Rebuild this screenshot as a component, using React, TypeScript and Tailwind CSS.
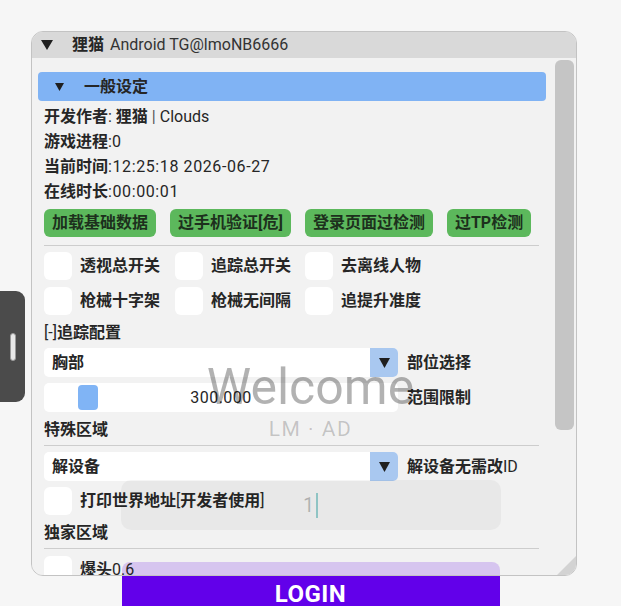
import React from "react";

// filled down-pointing triangle used for tree nodes and combo arrows
function Tri({ w, h, color = "#1f1f1f" }: { w: number; h: number; color?: string }) {
    return (
        <svg width={w} height={h} viewBox={`0 0 ${w} ${h}`} className="shrink-0">
            <path d={`M0 0H${w}L${w / 2} ${h}Z`} fill={color}/>
        </svg>
    );
}

function Check({ label }: { label: React.ReactNode }) {
    return (
        <div className="flex items-center gap-[8px]">
            <div className="w-[28px] h-[28px] rounded-[6px] bg-white shrink-0"/>
            <span className="leading-[18px] whitespace-nowrap">{label}</span>
        </div>
    );
}

function Combo({ value, label }: { value: string; label: React.ReactNode }) {
    return (
        <div className="flex items-center h-[29px]">
            <div className="flex w-[354px] h-full bg-white rounded-[5px] overflow-hidden">
                <span className="flex-1 pl-[8px] flex items-center font-bold">{value}</span>
                <div className="w-[28px] h-full bg-[#a9c8f0] flex items-center justify-center">
                    <Tri w={11} h={10}/>
                </div>
            </div>
            <span className="ml-[9px] whitespace-nowrap">{label}</span>
        </div>
    );
}

function Line({ children, className = "" }: { children: React.ReactNode; className?: string }) {
    return <div className={"h-[18px] leading-[18px] whitespace-nowrap " + className}>{children}</div>;
}

const buttons = ["加载基础数据", "过手机验证[危]", "登录页面过检测", "过TP检测"];

function App() {
    return (
        <div className="relative w-[621px] h-[606px] overflow-hidden bg-[#f6f6f6] font-['Roboto','Noto_Sans_CJK_SC',sans-serif] text-[16px] text-[#262626]">
            {/* login button, sits under the floating menu */}
            <div className="absolute inset-x-0 top-[562px] flex justify-center">
                <div className="w-[378px] h-[60px] rounded-[8px] bg-[#6200ea] flex justify-center pt-[19px]">
                    <span className="text-white font-bold text-[24px] leading-[26px] tracking-[0.5px]">LOGIN</span>
                </div>
            </div>

            {/* floating menu window */}
            <div className="absolute left-[31px] top-[31px] w-[546px] h-[545px] rounded-[12px] border border-[#c3c3c3] overflow-hidden flex flex-col">
                <div className="h-[26px] bg-[#d9d9d9] flex items-center pl-[9px] shrink-0">
                    <Tri w={12} h={10}/>
                    <span className="ml-[19px] font-bold">狸猫</span>
                    <span className="ml-[6px] text-[16px] text-[#333]">Android TG@lmoNB6666</span>
                </div>
                <div className="relative flex-1 flex bg-[#f0f0f0]/[0.82] overflow-hidden">
                    <div className="w-[508px] ml-[6px] pt-[14px] flex flex-col">
                        <div className="h-[29px] rounded-[4px] bg-[#80b3f4] flex items-center pl-[17px] shrink-0">
                            <Tri w={9} h={8}/>
                            <span className="ml-[20px] font-bold">一般设定</span>
                        </div>
                        <div className="pl-[6px] pr-[7px] flex flex-col">
                            <Line className="mt-[7px]"><b>开发作者</b>: <b>狸猫</b> <span className="text-[#555]">|</span> Clouds</Line>
                            <Line className="mt-[7px]"><b>游戏进程</b>:0</Line>
                            <Line className="mt-[7px] tracking-[0.6px]"><b className="tracking-normal">当前时间</b>:12:25:18 2026-06-27</Line>
                            <Line className="mt-[7px] tracking-[0.6px]"><b className="tracking-normal">在线时长</b>:00:00:01</Line>
                            <div className="mt-[8px] flex gap-[14px]">
                                {buttons.map(b => (
                                    <div key={b} className="h-[28px] px-[8px] rounded-[6px] bg-[#5cb85c] text-[#1d301d] font-bold flex items-center whitespace-nowrap">{b}</div>
                                ))}
                            </div>
                            <div className="mt-[8px] h-px bg-[#cdcdcd]"/>
                            <div className="mt-[6px] grid grid-cols-[131px_130px_1fr] gap-y-[7px] font-bold">
                                <Check label="透视总开关"/>
                                <Check label="追踪总开关"/>
                                <Check label="去离线人物"/>
                                <Check label="枪械十字架"/>
                                <Check label="枪械无间隔"/>
                                <Check label="追提升准度"/>
                            </div>
                            <Line className="mt-[9px]">[-]<b>追踪配置</b></Line>
                            <div className="mt-[6px] font-bold"><Combo value="胸部" label="部位选择"/></div>
                            <div className="mt-[6px] flex items-center h-[29px]">
                                <div className="relative w-[354px] h-full bg-white rounded-[5px] flex items-center justify-center">
                                    <div className="absolute left-[34px] top-[2px] w-[20px] h-[25px] rounded-[4px] bg-[#80b4f5]"/>
                                    <span className="text-[16px] tracking-[0.5px]">300.000</span>
                                </div>
                                <span className="ml-[9px] font-bold">范围限制</span>
                            </div>
                            <Line className="mt-[9px] font-bold">特殊区域</Line>
                            <div className="mt-[6px] h-px bg-[#cdcdcd]"/>
                            <div className="mt-[6px]"><Combo value="解设备" label={<><b>解设备无需改</b>ID</>}/></div>
                            <div className="mt-[6px]"><Check label={<><b>打印世界地址</b>[<b>开发者使用</b>]</>}/></div>
                            <Line className="mt-[9px] font-bold">独家区域</Line>
                            <div className="mt-[6px] h-px bg-[#cdcdcd]"/>
                            <div className="mt-[7px]"><Check label={<><b>爆头</b>0.6</>}/></div>
                        </div>
                    </div>
                    {/* scrollbar */}
                    <div className="ml-auto mr-[2px] w-[19px] pt-[2px]">
                        <div className="h-[370px] rounded-[6px] bg-[#c5c5c5]"/>
                    </div>
                    {/* resize grip */}
                    <svg width="19" height="19" viewBox="0 0 19 19" className="absolute right-0 bottom-0">
                        <path d="M19 0V19H0Z" fill="#d3d3d3"/>
                    </svg>
                </div>
            </div>

            {/* side drawer handle */}
            <div className="absolute left-0 top-[291px] w-[25px] h-[111px] rounded-r-[9px] bg-[#4b4b4b] flex items-center pl-[10px]">
                <div className="w-[6px] h-[28px] rounded-full bg-[#e8e8e8] border border-[#9a9a9a]"/>
            </div>

            {/* welcome overlay */}
            <div className="absolute inset-x-0 top-[362px] flex flex-col items-center pointer-events-none">
                <div className="text-[50px] leading-[50px] text-black/30">Welcome</div>
                <div className="mt-[7px] text-[21px] leading-[21px] tracking-[1.5px] text-black/20">LM · AD</div>
                <div className="mt-[40px] w-[380px] h-[50px] rounded-[10px] bg-black/[0.04] flex items-center justify-center">
                    <span className="text-[20px] text-black/25">1</span>
                    <span className="ml-[2px] w-[2px] h-[25px] bg-[#8fc4c4]"/>
                </div>
            </div>
        </div>
    );
}

export default App;
